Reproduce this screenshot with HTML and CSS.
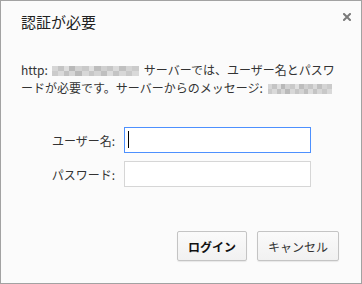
FILE: index.html
```html
<!DOCTYPE html>
<html lang="ja">
  <head>
    <meta charset="UTF-8" />
    <meta name="viewport" content="width=device-width, initial-scale=1.0" />
    <title>認証が必要</title>
    <link rel="stylesheet" href="styles.css">
  </head>
  <body>
    <div class="dialog">
      <div class="dialog-header">
        <h1 class="dialog-title">認証が必要</h1>
        <span class="close-btn">
          <svg width="8" height="8" viewBox="0 0 8 8">
            <path d="M1 1 L7 7 M7 1 L1 7" stroke="#7a7a7a" stroke-width="2" stroke-linecap="square" />
          </svg>
        </span>
      </div>

      <p class="message">http:<span class="blur blur-host"></span>サーバーでは、ユーザー名とパスワードが必要です。サーバーからのメッセージ:<span class="blur blur-realm"></span></p>

      <div class="form">
        <label class="form-label" for="username">ユーザー名:</label>
        <span class="field focused"><input id="username" class="form-input" type="text" /></span>
        <label class="form-label" for="password">パスワード:</label>
        <span class="field"><input id="password" class="form-input" type="password" /></span>
      </div>

      <div class="dialog-buttons">
        <button class="btn btn-primary">ログイン</button>
        <button class="btn">キャンセル</button>
      </div>
    </div>
  </body>
</html>
```

FILE: styles.css
```css
body {
  margin: 0;
  font-family: "Noto Sans CJK JP", "Noto Sans", sans-serif;
  color: #333;
}
.dialog {
  width: 362px;
  height: 284px;
  box-sizing: border-box;
  border: 1px solid #a2a2a2;
  background-color: #fbfbfb;
  padding: 11px 10px 0 20px;
}
.dialog-header {
  display: flex;
  justify-content: space-between;
  align-items: flex-start;
}
.dialog-title {
  margin: 0;
  font-size: 15px;
  font-weight: normal;
  line-height: 20px;
  color: #222;
}
.close-btn {
  display: flex;
  margin-top: 1px;
}
.message {
  margin: 29px 0 0 0;
  width: 320px;
  font-size: 12px;
  line-height: 18px;
  color: #333;
}
/* pixelated host / realm, as in the original capture */
.blur {
  display: inline-block;
  height: 10px;
  vertical-align: -1px;
  background:
    linear-gradient(90deg, #d6d6d6 0 7%, #c4c4c4 7% 14%, #dedede 14% 20%, #b9b9b9 20% 27%, #d2d2d2 27% 34%, #c9c9c9 34% 42%, #e0e0e0 42% 48%, #bdbdbd 48% 56%, #d0d0d0 56% 63%, #c6c6c6 63% 70%, #dadada 70% 77%, #c0c0c0 77% 85%, #d4d4d4 85% 92%, #cbcbcb 92% 100%) top / 100% 50% no-repeat,
    linear-gradient(90deg, #cbcbcb 0 7%, #dadada 7% 14%, #c2c2c2 14% 20%, #d6d6d6 20% 27%, #bababa 27% 34%, #d8d8d8 34% 42%, #c6c6c6 42% 48%, #d3d3d3 48% 56%, #bfbfbf 56% 63%, #dcdcdc 63% 70%, #c4c4c4 70% 77%, #d7d7d7 77% 85%, #c8c8c8 85% 92%, #d9d9d9 92% 100%) bottom / 100% 50% no-repeat;
}
.blur-host {
  width: 87px;
  margin: 0 5px 0 4px;
}
.blur-realm {
  width: 64px;
  margin-left: 5px;
}
.form {
  display: grid;
  grid-template-columns: 94px 187px;
  column-gap: 9px;
  row-gap: 8px;
  align-items: center;
  margin-top: 30px;
  font-size: 12px;
}
.form-label {
  text-align: right;
  color: #333;
}
.field {
  position: relative;
  display: flex;
}
.form-input {
  width: 100%;
  height: 26px;
  box-sizing: border-box;
  margin: 0;
  padding: 0 4px;
  border: 1px solid #d6d6d6;
  border-radius: 0;
  background-color: #fff;
  font: inherit;
  outline: none;
}
.focused .form-input {
  border-color: #4d90fe;
}
.focused::after {
  content: "";
  position: absolute;
  left: 4px;
  top: 4px;
  width: 1px;
  height: 17px;
  background-color: #000;
}
.dialog-buttons {
  display: flex;
  justify-content: flex-end;
  gap: 10px;
  margin-top: 44px;
  padding-right: 12px;
}
.btn {
  height: 30px;
  padding: 0 10px;
  border: 1px solid #c4c4c4;
  border-radius: 2px;
  background: linear-gradient(#fafafa, #f1f1f1);
  box-shadow: 0 1px 1px rgba(0, 0, 0, 0.08);
  font-family: inherit;
  font-size: 12px;
  color: #333;
}
.btn-primary {
  font-weight: bold;
  color: #111;
}
```
